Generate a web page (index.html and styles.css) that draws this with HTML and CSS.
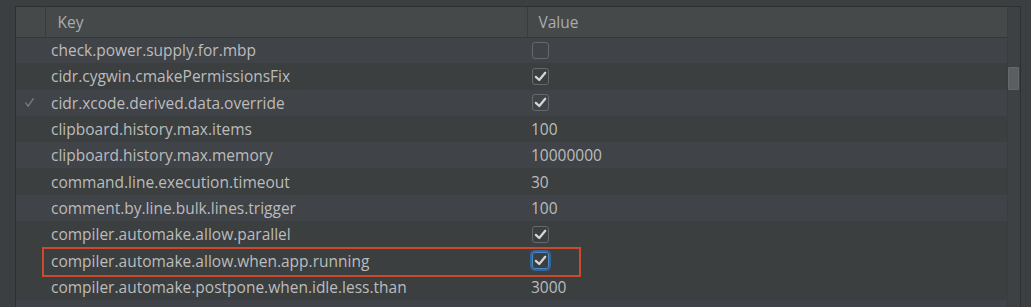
FILE: index.html
```html
<!DOCTYPE html>
<html lang="en">
<head>
    <meta charset="UTF-8">
    <title>Registry</title>
    <link rel="stylesheet" href="styles.css">
</head>
<body>
    <div class="frame">
        <div class="panel">
            <div class="table-wrap">
                <table class="props">
                    <colgroup>
                        <col class="col-mark">
                        <col class="col-key">
                        <col class="col-value">
                    </colgroup>
                    <thead>
                        <tr>
                            <th></th>
                            <th>Key</th>
                            <th>Value</th>
                        </tr>
                    </thead>
                    <tbody>
                        <tr>
                            <td></td>
                            <td>check.power.supply.for.mbp</td>
                            <td><span class="checkbox"></span></td>
                        </tr>
                        <tr>
                            <td></td>
                            <td>cidr.cygwin.cmakePermissionsFix</td>
                            <td><span class="checkbox"><svg viewBox="0 0 12 12"><polyline points="2.3,6.3 5,8.8 9.8,3"/></svg></span></td>
                        </tr>
                        <tr>
                            <td class="mark"><svg viewBox="0 0 12 12"><polyline points="1.5,6 4.5,10 10.5,1.5"/></svg></td>
                            <td>cidr.xcode.derived.data.override</td>
                            <td><span class="checkbox"><svg viewBox="0 0 12 12"><polyline points="2.3,6.3 5,8.8 9.8,3"/></svg></span></td>
                        </tr>
                        <tr>
                            <td></td>
                            <td>clipboard.history.max.items</td>
                            <td>100</td>
                        </tr>
                        <tr>
                            <td></td>
                            <td>clipboard.history.max.memory</td>
                            <td>10000000</td>
                        </tr>
                        <tr>
                            <td></td>
                            <td>command.line.execution.timeout</td>
                            <td>30</td>
                        </tr>
                        <tr>
                            <td></td>
                            <td>comment.by.line.bulk.lines.trigger</td>
                            <td>100</td>
                        </tr>
                        <tr>
                            <td></td>
                            <td>compiler.automake.allow.parallel</td>
                            <td><span class="checkbox"><svg viewBox="0 0 12 12"><polyline points="2.3,6.3 5,8.8 9.8,3"/></svg></span></td>
                        </tr>
                        <tr class="selected">
                            <td></td>
                            <td>compiler.automake.allow.when.app.running</td>
                            <td><span class="checkbox focused"><svg viewBox="0 0 12 12"><polyline points="2.3,6.3 5,8.8 9.8,3"/></svg></span></td>
                        </tr>
                        <tr>
                            <td></td>
                            <td>compiler.automake.postpone.when.idle.less.than</td>
                            <td>3000</td>
                        </tr>
                    </tbody>
                </table>
                <div class="highlight"></div>
            </div>
            <div class="scrollbar">
                <div class="thumb"></div>
            </div>
        </div>
    </div>
</body>
</html>
```

FILE: styles.css
```css
* {
    margin: 0;
    padding: 0;
    box-sizing: border-box;
}

body {
    font-family: 'Open Sans', 'Noto Sans', sans-serif;
    font-size: 15.5px;
    background-color: #3c3f41;
    color: #bcbcbc;
    height: 307px;
    overflow: hidden;
}

.frame {
    padding: 6px 10px 0 15px;
}

.panel {
    display: flex;
    border: 1px solid #2d2f31;
    border-bottom: none;
    height: 301px;
    overflow: hidden;
}

.table-wrap {
    position: relative;
    width: 991px;
    background-color: #404347;
}

.props {
    width: 991px;
    border-collapse: collapse;
    table-layout: fixed;
}

.col-mark {
    width: 29px;
}

.col-key {
    width: 482px;
}

.col-value {
    width: 480px;
}

.props th {
    height: 30px;
    background-color: #45494a;
    color: #a9adb0;
    font-weight: normal;
    text-align: left;
    padding-left: 12px;
    border-bottom: 1px solid #35383a;
    border-right: 1px solid #393c3e;
}

.props th:last-child {
    padding-left: 11px;
    border-right: none;
}

.props td {
    height: 26.3px;
    padding: 0 0 0 6px;
    white-space: nowrap;
    overflow: hidden;
    vertical-align: middle;
}

.props td:last-child {
    padding-left: 4px;
}

.props tbody tr:nth-child(odd) {
    background-color: #404347;
}

.props tbody tr:nth-child(even),
.props tbody tr.selected {
    background-color: #3b3f40;
}

.props td.mark {
    padding-left: 8px;
}

.mark svg {
    display: block;
    width: 11px;
    height: 11px;
    fill: none;
    stroke: #7d8083;
    stroke-width: 1.3;
}

.checkbox {
    display: block;
    width: 17px;
    height: 17px;
    margin-left: 1px;
    border: 1px solid #66696c;
    border-radius: 3px;
}

.checkbox svg {
    display: block;
    width: 15px;
    height: 15px;
    fill: none;
    stroke: #d6d6d6;
    stroke-width: 1.8;
    stroke-linecap: round;
    stroke-linejoin: round;
}

.checkbox.focused {
    border-color: #4a89c8;
    box-shadow: 0 0 0 2px #33659b;
}

.highlight {
    position: absolute;
    left: 26px;
    top: 240px;
    width: 539px;
    height: 30px;
    border: 2px solid #cc4a2b;
    pointer-events: none;
}

.scrollbar {
    width: 13px;
    background-color: #3e4143;
    border-left: 1px solid #3a3d3f;
}

.thumb {
    width: 11px;
    height: 23px;
    margin-top: 60px;
    background-color: #5b5e60;
    border: 1px solid #66696b;
    border-radius: 1px;
}
```
